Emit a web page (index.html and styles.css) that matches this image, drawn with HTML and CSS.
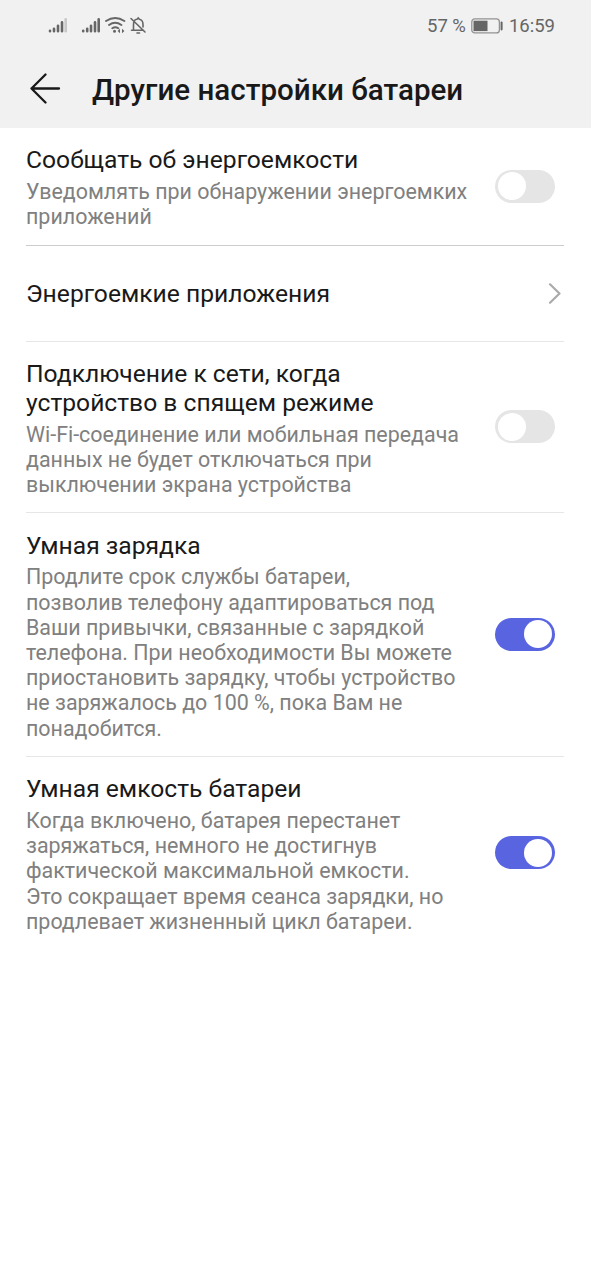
FILE: index.html
```html
<!DOCTYPE html>
<html lang="ru">
<head>
    <meta charset="UTF-8">
    <meta name="viewport" content="width=device-width, initial-scale=1.0">
    <title>Другие настройки батареи</title>
    <link rel="stylesheet" href="styles.css">
</head>
<body>
    <header class="header">
        <div class="status-bar">
            <svg class="status-icons" width="100" height="20" viewBox="0 0 100 20" fill="none" stroke="#666" stroke-width="2.6" stroke-linecap="round">
                <!-- SIM 1 -->
                <path d="M2 16.200v-.4M6 16.200v-2.500M10 16.200v-5.500M14 16.200v-9"/>
                <path d="M17.700 16.200v-12" stroke="#c8c8c8"/>
                <!-- SIM 2 -->
                <path d="M35.200 16.200v-.4M39.200 16.200v-2.500M43 16.200v-5.500M47 16.200v-9M50.700 16.200v-12"/>
                <!-- Wi-Fi -->
                <path d="M58 6q9.200-6 18.400 0M61 10q6.200-4.500 12.400 0M64.300 13.300q3-2 6 0" stroke-width="1.900"/>
                <circle cx="66.500" cy="16.200" r="1.500" fill="#666" stroke="none"/>
                <path d="M72 13.800v4.400l-2.400-2.200zM74 13.800v4.400l2.400-2.200z" fill="#666" stroke="none"/>
                <!-- звук выключен -->
                <path d="M83.500 15.200h12M85.500 15V9.500q0-5 3.500-5.300l1.200-1.200 1.200 1.200q3.600.6 3.600 5.300V12M89 18h2.500M83 3.500l14 13.500" stroke-width="1.600"/>
            </svg>
            <div class="status-right">
                <span class="percent">57 %</span>
                <svg class="battery" width="32" height="16" viewBox="0 0 32 16">
                    <rect x=".8" y=".9" width="27.600" height="14" rx="3" fill="none" stroke="#929292" stroke-width="1.300"/>
                    <rect x="2.500" y="2.700" width="14" height="10.400" fill="#666"/>
                    <rect x="29.600" y="3.600" width="2" height="8.800" rx=".8" fill="#666"/>
                </svg>
                <span class="time">16:59</span>
            </div>
        </div>
        <div class="title-bar">
            <svg class="back" width="32" height="32" viewBox="0 0 32 32" fill="none" stroke="#191919" stroke-width="2.300" stroke-linecap="round" stroke-linejoin="round">
                <path d="M30 15.500H2.500M16.500 1.500L2.500 15.500l14 14"/>
            </svg>
            <h1>Другие настройки батареи</h1>
        </div>
    </header>

    <main class="settings">
        <div class="row row-group-end">
            <div class="text">
                <h2>Сообщать об энергоемкости</h2>
                <p>Уведомлять при обнаружении энергоемких<br>приложений</p>
            </div>
            <div class="switch"></div>
        </div>

        <div class="row row-link">
            <h2>Энергоемкие приложения</h2>
            <svg class="chevron" width="14" height="22" viewBox="0 0 14 22" fill="none" stroke="#aaa" stroke-width="2.200" stroke-linecap="round" stroke-linejoin="round">
                <path d="M2 1.300l9.500 9.200L2 19.700"/>
            </svg>
        </div>

        <div class="row">
            <div class="text">
                <h2>Подключение к сети, когда<br>устройство в спящем режиме</h2>
                <p>Wi-Fi-соединение или мобильная передача<br>данных не будет отключаться при<br>выключении экрана устройства</p>
            </div>
            <div class="switch"></div>
        </div>

        <div class="row">
            <div class="text">
                <h2>Умная зарядка</h2>
                <p>Продлите срок службы батареи,<br>позволив телефону адаптироваться под<br>Ваши привычки, связанные с зарядкой<br>телефона. При необходимости Вы можете<br>приостановить зарядку, чтобы устройство<br>не заряжалось до 100 %, пока Вам не<br>понадобится.</p>
            </div>
            <div class="switch on"></div>
        </div>

        <div class="row">
            <div class="text">
                <h2>Умная емкость батареи</h2>
                <p>Когда включено, батарея перестанет<br>заряжаться, немного не достигнув<br>фактической максимальной емкости.<br>Это сокращает время сеанса зарядки, но<br>продлевает жизненный цикл батареи.</p>
            </div>
            <div class="switch on"></div>
        </div>
    </main>
</body>
</html>
```
FILE: styles.css
```css
* {
    box-sizing: border-box;
    margin: 0;
}

body {
    min-height: 100vh;
    background: #fff;
    font-family: Roboto, "Noto Sans", sans-serif;
    color: #191919;
}

.header {
    height: 128px;
    background: #f1f1f1;
}

.status-bar {
    display: flex;
    justify-content: space-between;
    align-items: center;
    height: 50px;
    padding: 0 36px 0 48px;
}

.status-right {
    display: flex;
    align-items: center;
    gap: 5px;
    padding-top: 1px;
    font-size: 18.5px;
    color: #666;
}

.time {
    margin-left: 1px;
}

.title-bar {
    display: flex;
    align-items: center;
    gap: 31px;
    height: 78px;
    padding-left: 29px;
}

h1 {
    padding-top: 2px;
    font-size: 29.55px;
    font-weight: 500;
    white-space: nowrap;
}

.settings {
    padding: 0 27px 0 26px;
}

.row {
    display: flex;
    justify-content: space-between;
    align-items: center;
    padding-right: 9px;
    border-bottom: 1px solid #e6e6e6;
}

.row-group-end {
    border-bottom-color: #ccc;
}

.row-link {
    height: 96px;
    padding: 2px 2px 0 0;
}

.row:last-child {
    border-bottom: none;
}

.text {
    padding: 18.4px 0 15px;
    white-space: nowrap;
}

h2 {
    font-size: 24.65px;
    font-weight: 400;
    line-height: 28.8px;
}

p {
    margin-top: 4px;
    font-size: 21.43px;
    line-height: 25.2px;
    color: #808080;
}

.switch {
    display: flex;
    align-items: center;
    flex: none;
    width: 60px;
    height: 33px;
    padding: 0 3px;
    border-radius: 17px;
    background: #e5e5e5;
}

.switch::before {
    content: "";
    width: 28px;
    height: 28px;
    border-radius: 50%;
    background: #fff;
}

.switch.on {
    justify-content: flex-end;
    background: #5965e0;
}
```
